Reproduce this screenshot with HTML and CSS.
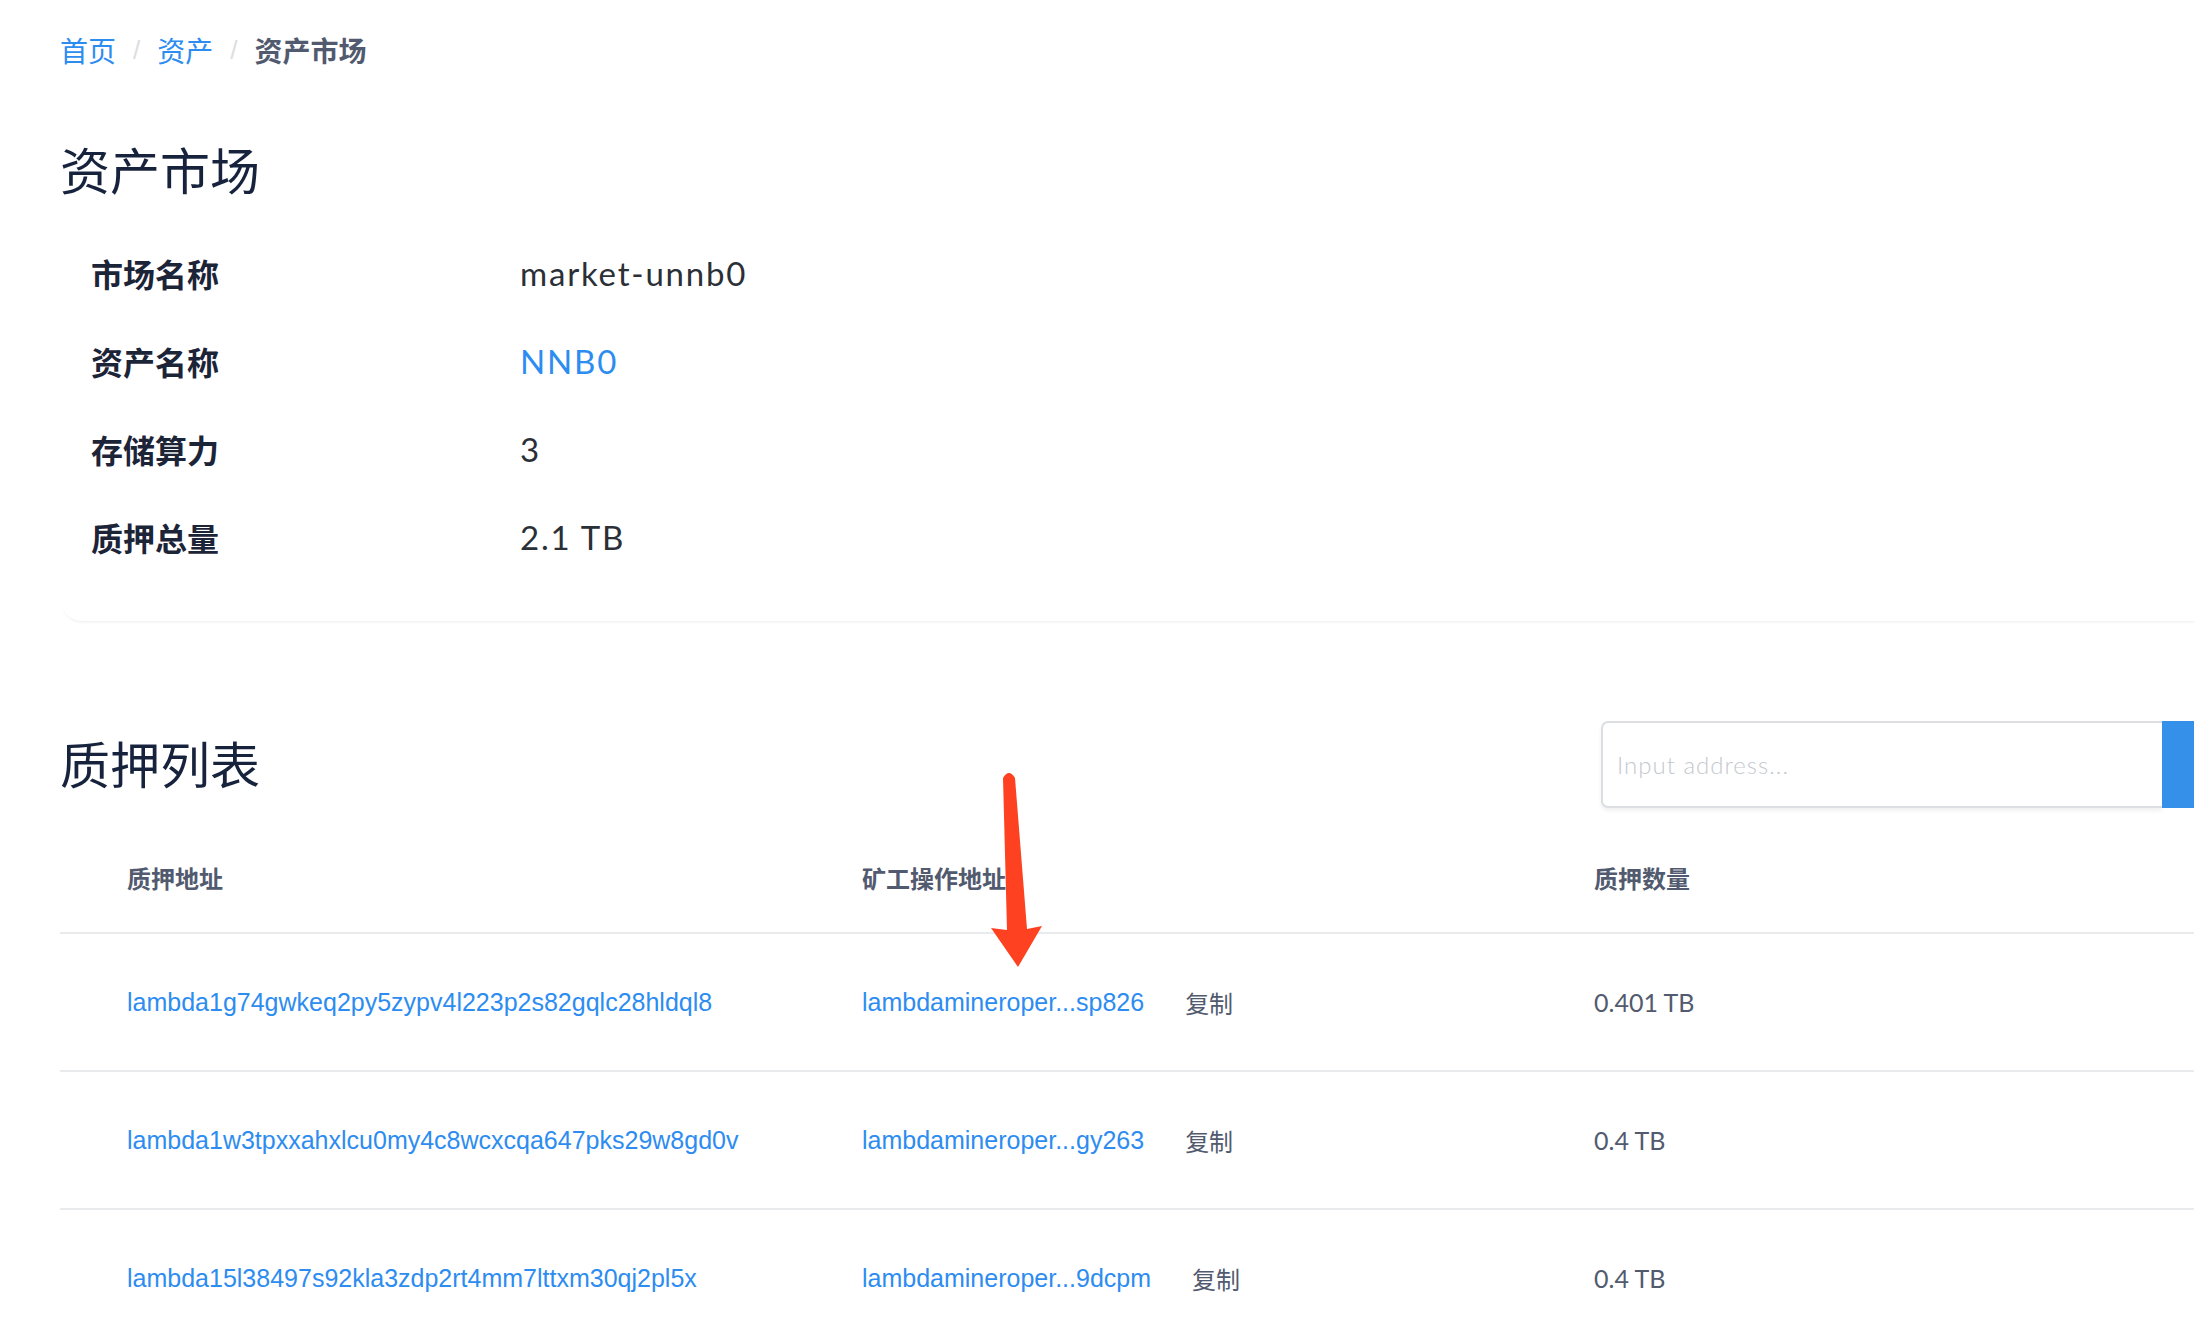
FILE: index.html
```html
<!DOCTYPE html>
<html lang="zh-CN">
<head>
<meta charset="utf-8">
<title>资产市场</title>
<link rel="stylesheet" href="styles.css">
</head>
<body>
<div class="page">
  <nav class="breadcrumb">
    <a class="crumb-link" href="#">首页</a>
    <span class="crumb-sep">/</span>
    <a class="crumb-link" href="#">资产</a>
    <span class="crumb-sep">/</span>
    <span class="crumb-current">资产市场</span>
  </nav>

  <h1 class="page-title">资产市场</h1>

  <section class="info-card">
    <div class="info-row">
      <div class="info-label">市场名称</div>
      <div class="info-value">market-unnb0</div>
    </div>
    <div class="info-row">
      <div class="info-label">资产名称</div>
      <div class="info-value info-link">NNB0</div>
    </div>
    <div class="info-row">
      <div class="info-label">存储算力</div>
      <div class="info-value">3</div>
    </div>
    <div class="info-row">
      <div class="info-label">质押总量</div>
      <div class="info-value">2.1 TB</div>
    </div>
  </section>

  <div class="section-head">
    <h2 class="section-title">质押列表</h2>
    <div class="search">
      <input class="search-input" type="text" placeholder="Input address...">
      <button class="search-btn" type="button"></button>
    </div>
  </div>

  <div class="table">
    <div class="tr th">
      <div class="cell">质押地址</div>
      <div class="cell">矿工操作地址</div>
      <div class="cell">质押数量</div>
    </div>
    <div class="tr">
      <div class="cell"><a class="link" href="#">lambda1g74gwkeq2py5zypv4l223p2s82gqlc28hldql8</a></div>
      <div class="cell"><a class="link" href="#">lambdamineroper...sp826</a><span class="copy">复制</span></div>
      <div class="cell amount">0.401 TB</div>
    </div>
    <div class="tr">
      <div class="cell"><a class="link" href="#">lambda1w3tpxxahxlcu0my4c8wcxcqa647pks29w8gd0v</a></div>
      <div class="cell"><a class="link" href="#">lambdamineroper...gy263</a><span class="copy">复制</span></div>
      <div class="cell amount">0.4 TB</div>
    </div>
    <div class="tr">
      <div class="cell"><a class="link" href="#">lambda15l38497s92kla3zdp2rt4mm7lttxm30qj2pl5x</a></div>
      <div class="cell"><a class="link" href="#">lambdamineroper...9dcpm</a><span class="copy">复制</span></div>
      <div class="cell amount">0.4 TB</div>
    </div>
  </div>

  <svg class="annotation" width="2194" height="1338" viewBox="0 0 2194 1338" aria-hidden="true">
    <path d="M1003 778 Q1009 768 1015 778 L1027 929 L1042 926 L1018 967 L991 928 L1007 930 Z" fill="#fe4221"/>
  </svg>
</div>
</body>
</html>
```

FILE: styles.css
```css
html, body {
  margin: 0;
  padding: 0;
  background: #ffffff;
}
body {
  overflow: hidden;
  font-family: "Noto Sans CJK SC", "Liberation Sans", sans-serif;
  color: #17233d;
}
.page {
  position: relative;
  width: 2198px;
  padding-left: 60px;
}

.breadcrumb {
  display: flex;
  align-items: center;
  padding-top: 30px;
  height: 40px;
  font-size: 28px;
  line-height: 40px;
}
.crumb-link {
  color: #2d8cf0;
  text-decoration: none;
}
.crumb-sep {
  color: #dcdee2;
  margin: 0 17px;
  font-family: "Liberation Sans", sans-serif;
  font-size: 26px;
}
.crumb-current {
  color: #515a6e;
  font-weight: 700;
}

.page-title {
  margin: 68px 0 0;
  font-size: 50px;
  line-height: 60px;
  font-weight: 400;
  color: #17233d;
}

.info-card {
  margin-top: 31px;
  padding: 0 0 40px 31px;
  border-radius: 0 0 0 22px;
  box-shadow: 0 3px 3px -2px rgba(0, 0, 0, 0.07);
}
.info-row {
  display: flex;
  align-items: center;
  height: 88px;
}
.info-label {
  width: 429px;
  font-size: 32px;
  font-weight: 700;
  color: #1c2438;
}
.info-value {
  font-family: "Lato", "Noto Sans CJK SC", sans-serif;
  font-size: 33px;
  font-weight: 400;
  letter-spacing: 1.8px;
  color: #2b2f36;
}
.info-link {
  color: #2d8cf0;
}

.section-head {
  display: flex;
  align-items: center;
  justify-content: space-between;
  margin-top: 100px;
  height: 87px;
}
.section-title {
  margin: 0 0 6px;
  font-size: 50px;
  line-height: 60px;
  font-weight: 400;
  color: #17233d;
}
.search {
  display: flex;
  height: 87px;
}
.search-input {
  box-sizing: border-box;
  width: 561px;
  height: 87px;
  border: 2px solid #dcdee2;
  border-right: none;
  border-radius: 7px 0 0 7px;
  padding: 0 0 0 14px;
  font-family: "Lato", sans-serif;
  font-size: 24px;
  font-weight: 300;
  letter-spacing: 1px;
  color: #515a6e;
  box-shadow: 0 3px 4px rgba(0, 0, 0, 0.06);
  outline: none;
}
.search-input::placeholder {
  color: #c5c8ce;
}
.search-btn {
  width: 96px;
  height: 87px;
  border: none;
  background: #3590e9;
}

.table {
  margin-top: 14px;
}
.tr {
  display: grid;
  grid-template-columns: 735px 732px 1fr;
  align-items: center;
  padding-left: 67px;
  height: 136px;
  border-bottom: 2px solid #e8eaec;
}
.tr.th {
  height: 110px;
  font-size: 24px;
  font-weight: 700;
  color: #515a6e;
}
.cell {
  display: flex;
  align-items: center;
}
.link {
  font-family: "Liberation Sans", sans-serif;
  font-size: 25px;
  color: #2d8cf0;
  text-decoration: none;
}
.copy {
  margin-left: 41px;
  font-size: 24px;
  color: #515a6e;
}
.amount {
  font-family: "Lato", sans-serif;
  font-size: 25px;
  color: #515a6e;
}

.annotation {
  position: absolute;
  top: 0;
  left: 0;
  pointer-events: none;
}
```
